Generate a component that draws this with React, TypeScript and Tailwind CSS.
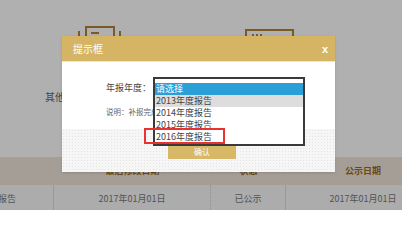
import React from "react";

const font = "font-['Noto_Sans_CJK_SC','Microsoft_YaHei',sans-serif]";

const options = ["请选择", "2013年度报告", "2014年度报告", "2015年度报告", "2016年度报告"];

function PageBehind() {
  return (
    <div className="flex flex-col">
      <div className="flex items-start pt-[25px] h-[37px]">
        <svg className="ml-[77px]" width="46" height="12" viewBox="0 0 46 12" fill="none">
          <rect x="1" y="6" width="2" height="6" fill="#b28336" />
          <path d="M9 12V2H37V12" stroke="#b28336" strokeWidth="2" />
          <rect x="14" y="7" width="8" height="2" fill="#b28336" />
          <rect x="42" y="6" width="2" height="6" fill="#b28336" />
        </svg>
        <svg className="ml-[122px] mt-[4px]" width="50" height="8" viewBox="0 0 50 8" fill="none">
          <path d="M1 8V1H48V8" stroke="#b28336" strokeWidth="2" />
          <rect x="7" y="5" width="2" height="2" fill="#b28336" />
          <rect x="11" y="5" width="2" height="2" fill="#b28336" />
          <rect x="15" y="5" width="2" height="2" fill="#b28336" />
        </svg>
      </div>
      <div className="mt-[54px] pl-[45px] text-[10px] leading-[12px] text-[#666]">其他信息</div>
      <div className="mt-[54px]">
        <div className="flex h-[28px] bg-[#efe5d9] text-[9px] font-bold text-[#9b6b1a] items-center">
          <div className="w-[54px] shrink-0" />
          <div className="w-[157px] shrink-0 text-center">最后修改日期</div>
          <div className="w-[75px] shrink-0 text-center">状态</div>
          <div className="w-[154px] shrink-0 text-center">公示日期</div>
        </div>
        <div className="flex h-[28px] bg-[#f9f9f9] text-[9px] text-[#7a7a7a] items-center">
          <div className="w-[54px] h-full shrink-0 flex items-center justify-end overflow-hidden whitespace-nowrap pr-[37px] border-r border-[#dedede]">2016年度报告</div>
          <div className="w-[157px] h-full shrink-0 flex items-center justify-center border-r border-dotted border-[#d0d0d0]">2017年01月01日</div>
          <div className="w-[75px] h-full shrink-0 flex items-center justify-center border-r border-[#dedede]">已公示</div>
          <div className="w-[154px] h-full shrink-0 flex items-center justify-center">2017年01月01日</div>
        </div>
      </div>
    </div>
  );
}

function Dialog() {
  return (
    <div className="absolute left-[62px] top-[36px] w-[273px] shadow-sm">
      <div className="h-[25px] bg-[#d5b563] flex items-center justify-between pl-[11px] pr-[7px] text-white">
        <span className="text-[10px] leading-[12px]">提示框</span>
        <span className="text-[11px] font-bold leading-[12px] font-['Liberation_Sans',sans-serif]">x</span>
      </div>
      <div className="h-[1px] bg-[#f1e5c6]" />
      <div className="h-[67px] bg-white pl-[44px] pt-[15px]">
        <div className="flex items-start">
          <span className="w-[47px] pt-[5px] text-[9px] leading-[12px] text-[#444]">年报年度：</span>
          <div className="w-[152px] h-[17px] border border-[#888] bg-white" />
        </div>
        <div className="mt-[13px] text-[7.5px] leading-[10px] text-[#666]">说明：补报完成后请确认提交</div>
      </div>
      <div className="h-[43px] bg-[#f6f6f6] bg-[radial-gradient(#e4e4e4_0.6px,transparent_0.7px)] bg-[length:3px_3px] pt-[15px] pl-[106px]">
        <button className="w-[68px] h-[15px] bg-[#d6b867] text-white text-[8px] leading-[15px] flex items-center justify-center">
          确认
        </button>
      </div>

      <div className="absolute left-[91px] top-[41px] w-[152px] h-[69px] border-2 border-[#3a3a3a] bg-white pt-[4px] pb-[1px]">
        {options.map((o, i) => (
          <div
            key={o}
            className={
              "h-[12px] pl-[1px] text-[9px] leading-[12px] whitespace-nowrap " +
              (i === 0 ? "bg-[#2a9fd8] text-white" : i === 1 ? "bg-[#dddddd] text-[#444]" : "text-[#444]")
            }
          >
            {o}
          </div>
        ))}
      </div>
      <div className="absolute left-[82px] top-[92px] w-[81px] h-[16px] border-2 border-[#e8322f]" />
    </div>
  );
}

export default function App() {
  return (
    <div className={`relative w-[402px] h-[210px] overflow-hidden bg-white ${font}`}>
      <PageBehind />
      <div className="absolute inset-0 bg-black/[0.31]" />
      <Dialog />
    </div>
  );
}
